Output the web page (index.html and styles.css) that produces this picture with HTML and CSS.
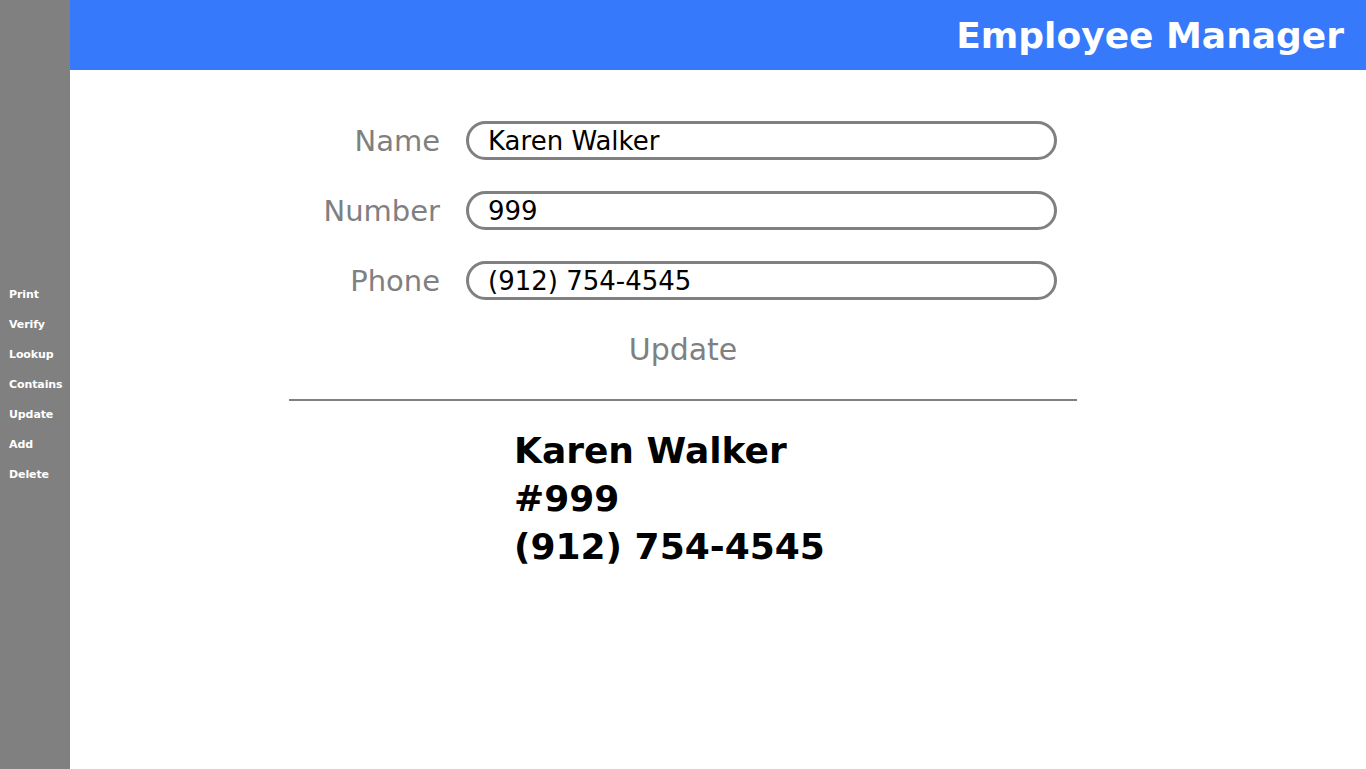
FILE: index.html
```html
<!DOCTYPE html>
<html>
<head>
<meta charset="utf-8">
<title>Employee Manager</title>
<link rel="stylesheet" href="styles.css">
</head>
<body>
<nav class="sidebar">
  <a class="nav-item">Print</a>
  <a class="nav-item">Verify</a>
  <a class="nav-item">Lookup</a>
  <a class="nav-item">Contains</a>
  <a class="nav-item">Update</a>
  <a class="nav-item">Add</a>
  <a class="nav-item">Delete</a>
</nav>
<div class="main">
  <header class="topbar"><h1 class="title">Employee Manager</h1></header>
  <section class="panel">
    <div class="row"><label class="label">Name</label><div class="field">Karen Walker</div></div>
    <div class="row"><label class="label">Number</label><div class="field">999</div></div>
    <div class="row"><label class="label">Phone</label><div class="field">(912) 754-4545</div></div>
    <div class="action">Update</div>
    <hr class="divider">
    <div class="result">
      <div class="result-line">Karen Walker</div>
      <div class="result-line">#999</div>
      <div class="result-line">(912) 754-4545</div>
    </div>
  </section>
</div>
</body>
</html>
```

FILE: styles.css
```css
html, body {
  margin: 0;
  padding: 0;
  height: 100%;
}
body {
  display: flex;
  font-family: "DejaVu Sans", "Noto Sans", sans-serif;
  background: #ffffff;
  overflow: hidden;
}
.sidebar {
  width: 70px;
  flex: 0 0 70px;
  background: #808080;
  display: flex;
  flex-direction: column;
  justify-content: center;
  height: 769px;
}
.nav-item {
  display: block;
  height: 30px;
  line-height: 30px;
  padding-left: 9px;
  color: #ffffff;
  font-size: 11px;
  font-weight: bold;
  letter-spacing: -0.1px;
}
.main {
  flex: 1;
  display: flex;
  flex-direction: column;
}
.topbar {
  height: 70px;
  background: #3779fb;
  display: flex;
  align-items: center;
  justify-content: flex-end;
  padding-right: 22px;
}
.title {
  margin: 0;
  color: #ffffff;
  font-size: 36px;
  font-weight: bold;
  line-height: 70px;
  padding-top: 2px;
}
.panel {
  width: 788px;
  margin-left: 219px;
  padding-top: 51px;
}
.row {
  display: flex;
  align-items: center;
  height: 39px;
  margin-bottom: 31px;
}
.label {
  width: 151px;
  text-align: right;
  color: #808080;
  font-size: 29px;
  margin-right: 26px;
}
.field {
  box-sizing: border-box;
  width: 591px;
  height: 39px;
  border: 3px solid #808080;
  border-radius: 20px;
  padding-left: 19px;
  font-size: 26px;
  line-height: 35px;
  color: #000000;
}
.action {
  text-align: center;
  color: #808080;
  font-size: 30px;
  line-height: 34px;
  padding-top: 2px;
}
.divider {
  border: none;
  border-top: 2px solid #808080;
  margin: 32px 0 0 0;
}
.result {
  padding-left: 225px;
  padding-top: 26px;
}
.result-line {
  font-size: 36px;
  font-weight: bold;
  line-height: 48px;
  color: #000000;
}
```
